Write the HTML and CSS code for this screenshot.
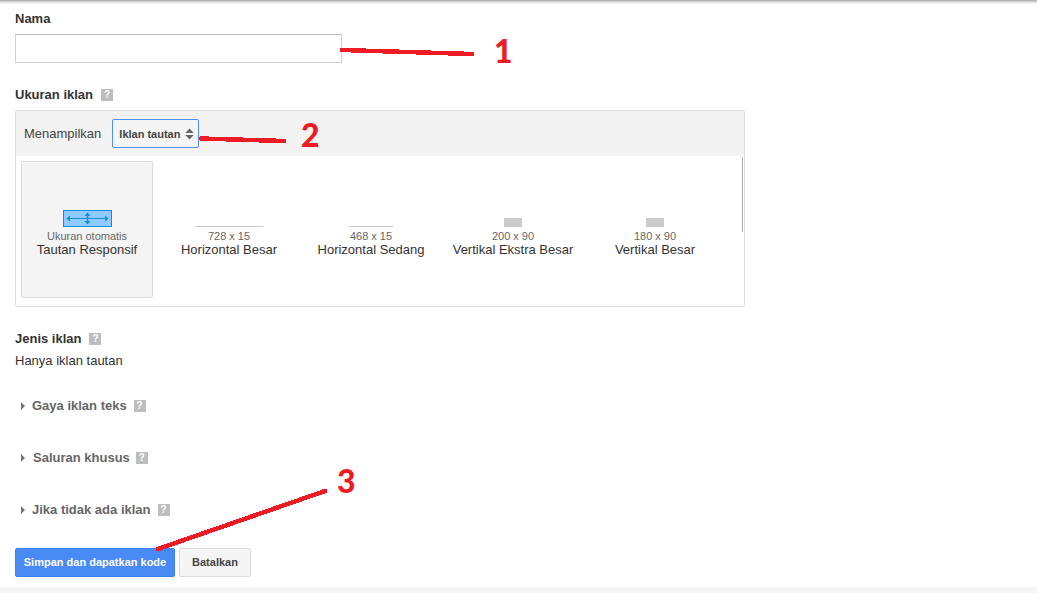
FILE: index.html
```html
<!DOCTYPE html>
<html lang="id">
<head>
<meta charset="utf-8">
<title>Iklan tautan</title>
<link rel="stylesheet" href="styles.css">
</head>
<body>
<div class="topbar"></div>
<main class="form">
  <section class="field-name">
    <label class="label">Nama</label>
    <input class="text-input" type="text">
  </section>

  <section class="field-size">
    <div class="label-row">
      <span class="label">Ukuran iklan</span><span class="help">?</span>
    </div>
    <div class="panel">
      <div class="toolbar">
        <span class="toolbar-label">Menampilkan</span>
        <div class="select">
          <span>Iklan tautan</span>
          <svg class="updown" width="9" height="12" viewBox="0 0 9 12"><path d="M4.5 0.5L8.7 5H0.3zM4.5 11.5L0.3 7H8.7z" fill="#666"/></svg>
        </div>
      </div>
      <div class="tiles">
        <div class="tile tile-active">
          <svg class="resp-icon" width="49" height="17" viewBox="0 0 49 17">
            <rect x="0.5" y="0.5" width="48" height="16" fill="#90cbff" stroke="#0f8fdc"/>
            <path d="M5 8.5H44" stroke="#0f8fdc" fill="none"/>
            <path d="M24.5 4V13" stroke="#0f8fdc" stroke-width="1.5" fill="none"/>
            <path d="M3.5 8.5L7 5.5V11.5zM45.5 8.5L42 5.5V11.5zM24.5 2.5L27.5 6H21.5zM24.5 14.5L21.5 11H27.5z" fill="#0f8fdc"/>
          </svg>
          <div class="dim">Ukuran otomatis</div>
          <div class="name">Tautan Responsif</div>
        </div>
        <div class="tile">
          <div class="shape shape-728"></div>
          <div class="dim">728 x 15</div>
          <div class="name">Horizontal Besar</div>
        </div>
        <div class="tile">
          <div class="shape shape-468"></div>
          <div class="dim">468 x 15</div>
          <div class="name">Horizontal Sedang</div>
        </div>
        <div class="tile">
          <div class="shape shape-200"></div>
          <div class="dim">200 x 90</div>
          <div class="name">Vertikal Ekstra Besar</div>
        </div>
        <div class="tile">
          <div class="shape shape-180"></div>
          <div class="dim">180 x 90</div>
          <div class="name">Vertikal Besar</div>
        </div>
      </div>
      <div class="scrollbar"></div>
    </div>
  </section>

  <section class="field-type">
    <div class="label-row">
      <span class="label">Jenis iklan</span><span class="help">?</span>
    </div>
    <div class="type-value">Hanya iklan tautan</div>
  </section>

  <section class="collapsibles">
    <div class="collapsible"><span class="tri"></span><span class="coll-label">Gaya iklan teks</span><span class="help">?</span></div>
    <div class="collapsible"><span class="tri"></span><span class="coll-label coll-shift">Saluran khusus</span><span class="help">?</span></div>
    <div class="collapsible"><span class="tri"></span><span class="coll-label">Jika tidak ada iklan</span><span class="help">?</span></div>
  </section>

  <div class="actions">
    <button class="btn btn-primary" type="button">Simpan dan dapatkan kode</button>
    <button class="btn btn-default" type="button">Batalkan</button>
  </div>
</main>
<div class="footer-strip"></div>

<svg class="marks" width="1037" height="593" viewBox="0 0 1037 593">
  <path class="mark-line" d="M342 50L472 54"/>
  <path class="mark-line" d="M201 138.5L284 141"/>
  <path class="mark-line" d="M158 549L325 491"/>
</svg>
<span class="mark-num num-1">1</span>
<span class="mark-num num-2">2</span>
<span class="mark-num num-3">3</span>
</body>
</html>
```
FILE: styles.css
```css
* { box-sizing: border-box; }
html, body { margin: 0; padding: 0; }
body {
  width: 1037px;
  height: 593px;
  overflow: hidden;
  position: relative;
  background: #fff;
  font-family: "Liberation Sans", Arial, sans-serif;
  color: #333;
  font-size: 13px;
}
.topbar {
  height: 4px;
  background: linear-gradient(#a9a9a9, #e4e4e4 60%, #fff);
}
.form {
  padding: 0 0 0 15px;
  height: 583px;
}
.label {
  display: block;
  font-weight: bold;
  font-size: 13px;
  line-height: 15px;
  color: #333;
}
.field-name { padding-top: 7px; }
.text-input {
  display: block;
  width: 327px;
  height: 29px;
  margin: 8px 0 0;
  border: 1px solid #d2d2d2;
  border-top-color: #bdbdbd;
  background: #fff;
  padding: 0 6px;
}
.field-size { padding-top: 24px; }
.label-row { display: flex; align-items: center; height: 15px; }
.help {
  width: 12px;
  height: 12px;
  margin-left: 8px;
  background: #bdbdbd;
  color: #fff;
  font-size: 10px;
  font-weight: bold;
  line-height: 12px;
  text-align: center;
}
.panel {
  position: relative;
  width: 730px;
  height: 197px;
  margin-top: 8px;
  border: 1px solid #dedede;
  border-radius: 2px;
}
.toolbar {
  display: flex;
  align-items: center;
  height: 45px;
  padding-left: 8px;
  background: #f3f3f3;
}
.toolbar-label { font-size: 13px; color: #444; }
.select {
  display: flex;
  align-items: center;
  justify-content: space-between;
  width: 87px;
  height: 29px;
  margin-left: 11px;
  padding: 0 4px 0 6px;
  border: 1px solid #4d90fe;
  border-radius: 2px;
  background: #f5f5f5;
  font-size: 11px;
  font-weight: bold;
  color: #444;
}
.tiles {
  display: flex;
  padding: 5px 0 0 5px;
}
.tile {
  display: flex;
  flex-direction: column;
  align-items: center;
  justify-content: flex-end;
  width: 152px;
  height: 137px;
  padding-bottom: 41px;
  margin-right: -10px;
  text-align: center;
  white-space: nowrap;
}
.tile-active {
  width: 132px;
  margin-right: 0;
  padding-bottom: 40px;
  background: #f4f4f4;
  border: 1px solid #dcdcdc;
  border-radius: 2px;
}
.resp-icon { display: block; margin-bottom: 3px; }
.dim { font-size: 11px; line-height: 12px; color: #666; }
.name { font-size: 13px; line-height: 15px; color: #333; }
.shape { background: #cacaca; margin-bottom: 3px; }
.shape-728 { width: 68px; height: 1px; }
.shape-468 { width: 44px; height: 1px; }
.shape-200, .shape-180 { width: 18px; height: 9px; }
.scrollbar {
  position: absolute;
  top: 46px;
  right: 1px;
  width: 1px;
  height: 75px;
  background: #aaa;
}
.field-type { padding-top: 24px; }
.type-value { margin-top: 7px; font-size: 13px; line-height: 15px; color: #333; }
.collapsibles { padding: 0 0 0 5px; }
.collapsible {
  display: flex;
  align-items: center;
  height: 15px;
  margin-top: 37px;
}
.collapsibles .collapsible:first-child { margin-top: 30px; }
.tri {
  width: 0;
  height: 0;
  border-left: 4px solid #777;
  border-top: 4px solid transparent;
  border-bottom: 4px solid transparent;
  margin: 0 7px 0 1px;
}
.coll-label { font-size: 13px; font-weight: bold; color: #666; }
.coll-shift { margin-left: 1px; margin-right: -1px; }
.collapsible .help { margin-left: 7px; }
.actions {
  display: flex;
  gap: 4px;
  margin-top: 31px;
}
.btn {
  height: 29px;
  padding: 0 0 2px;
  border-radius: 2px;
  font-family: inherit;
  font-size: 11px;
  font-weight: bold;
}
.btn-primary {
  width: 160px;
  background: #4a8af4;
  border: 1px solid #3f80ee;
  color: #fff;
}
.btn-default {
  width: 72px;
  background: #f5f5f5;
  border: 1px solid #dcdcdc;
  color: #444;
}
.footer-strip {
  position: absolute;
  left: 0;
  right: 0;
  bottom: 0;
  height: 6px;
  background: #f5f5f5;
}
.marks { position: absolute; left: 0; top: 0; pointer-events: none; }
.mark-line {
  fill: none;
  stroke: #ed1c24;
  stroke-width: 4.5;
  stroke-linecap: round;
  shape-rendering: crispEdges;
}
.mark-num {
  position: absolute;
  font-family: Lato, sans-serif;
  font-weight: 900;
  font-size: 32px;
  line-height: 32px;
  color: #ed1c24;
}
.num-1 { left: 494px; top: 35px; }
.num-2 { left: 301px; top: 119px; }
.num-3 { left: 337px; top: 465px; }
```
